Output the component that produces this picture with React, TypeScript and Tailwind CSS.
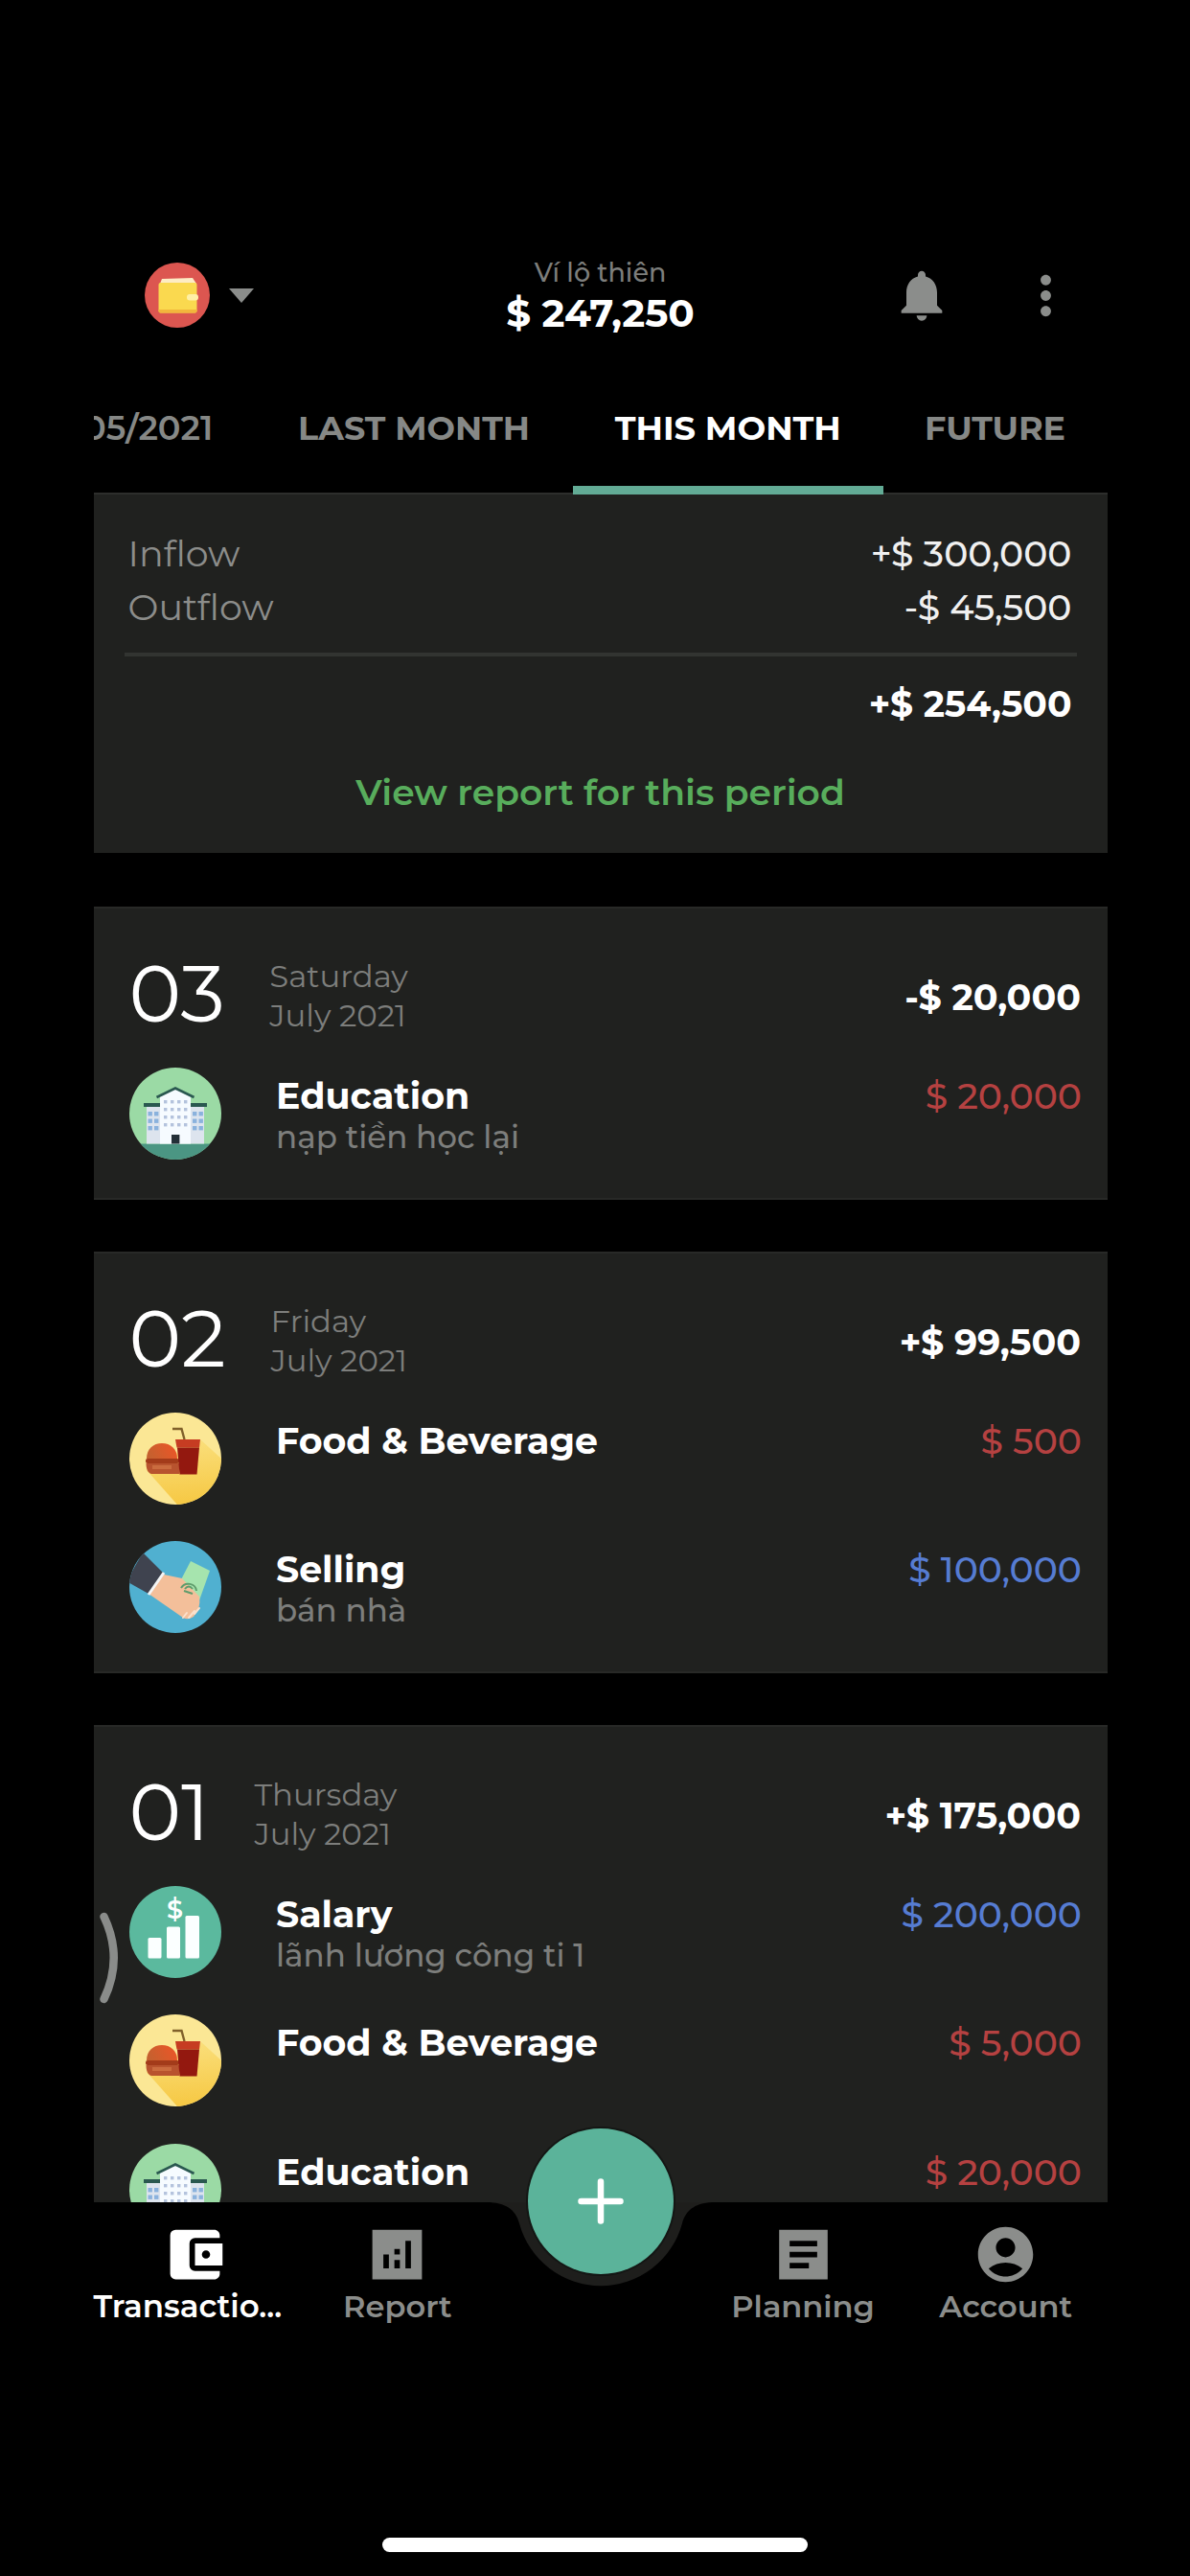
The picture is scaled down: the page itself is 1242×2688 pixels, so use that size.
import type { ReactNode } from "react";
import { MdAccountBalanceWallet, MdAccountCircle, MdMoreVert, MdNotifications } from "react-icons/md";

type IconName = "education" | "food" | "selling" | "salary";
type Entry = { icon: IconName; title: string; note?: string; amount: string; income?: boolean };
type Day = { day: string; weekday: string; month: string; total: string; entries: Entry[] };

const days: Day[] = [
  {
    day: "03",
    weekday: "Saturday",
    month: "July 2021",
    total: "-$ 20,000",
    entries: [{ icon: "education", title: "Education", note: "nạp tiền học lại", amount: "$ 20,000" }],
  },
  {
    day: "02",
    weekday: "Friday",
    month: "July 2021",
    total: "+$ 99,500",
    entries: [
      { icon: "food", title: "Food & Beverage", amount: "$ 500" },
      { icon: "selling", title: "Selling", note: "bán nhà", amount: "$ 100,000", income: true },
    ],
  },
  {
    day: "01",
    weekday: "Thursday",
    month: "July 2021",
    total: "+$ 175,000",
    entries: [
      { icon: "salary", title: "Salary", note: "lãnh lương công ti 1", amount: "$ 200,000", income: true },
      { icon: "food", title: "Food & Beverage", amount: "$ 5,000" },
      { icon: "education", title: "Education", amount: "$ 20,000" },
    ],
  },
];

function WalletBadge() {
  return (
    <svg viewBox="0 0 68 68" className="size-[68px]">
      <circle cx="34" cy="34" r="34" fill="#dc5650" />
      <path d="M16 22L18 17L50 16L54 22Z" fill="#fdecc4" />
      <rect x="14.5" y="21" width="40" height="31.5" rx="2" fill="#fad94f" />
      <path d="M14.5 49h40v1.5a2 2 0 0 1-2 2h-36a2 2 0 0 1-2-2z" fill="#f2b63c" />
      <rect x="44" y="33" width="12" height="6.5" rx="3" fill="#fff0a6" />
    </svg>
  );
}

function EducationIcon() {
  return (
    <svg viewBox="0 0 96 96" className="size-24">
      <defs>
        <clipPath id="edu-disc">
          <circle cx="48" cy="48" r="48" />
        </clipPath>
      </defs>
      <g clipPath="url(#edu-disc)">
        <rect width="96" height="96" fill="#9bdaa5" />
        <rect y="79.5" width="96" height="17" fill="#4b9683" />
        <rect x="18" y="41" width="60" height="38.5" fill="#dde4ee" />
        <rect x="15" y="37" width="18" height="4" fill="#2a5850" />
        <rect x="63" y="37" width="18" height="4" fill="#2a5850" />
        <path d="M32 79.5V30L48 22L64 30V79.5Z" fill="#f6fbff" />
        <path d="M28.5 31L48 21.5L67.5 31" fill="none" stroke="#2a5850" strokeWidth="2.6" />
        {[34, 42, 50, 58].map((y) =>
          [36, 43, 50, 57].map((x) => <rect key={`${x}-${y}`} x={x} y={y} width="3.4" height="3.4" fill="#b4c3dd" />),
        )}
        {[46, 53.5, 61].map((y) =>
          [19.5, 26, 66, 72.5].map((x) => <rect key={`${x}-${y}`} x={x} y={y} width="4.4" height="4.4" fill="#8bb2dd" />),
        )}
        <rect x="44" y="70" width="8.4" height="9.5" fill="#232f37" />
      </g>
    </svg>
  );
}

function FoodIcon() {
  return (
    <svg viewBox="0 0 96 96" className="size-24">
      <defs>
        <clipPath id="food-disc">
          <circle cx="48" cy="48" r="48" />
        </clipPath>
        <linearGradient id="food-shade" x1="0.5" y1="0" x2="0.6" y2="1">
          <stop offset="0" stopColor="#fadf7c" />
          <stop offset="1" stopColor="#f6c843" />
        </linearGradient>
        <linearGradient id="food-bun" x1="0" y1="0.6" x2="1" y2="0.3">
          <stop offset="0" stopColor="#c4612f" />
          <stop offset="1" stopColor="#ec5527" />
        </linearGradient>
      </defs>
      <g clipPath="url(#food-disc)">
        <rect width="96" height="96" fill="#fbe795" />
        <path d="M74 28L96 48V96H50L18 60Z" fill="url(#food-shade)" />
        <path d="M18 48C18 38 25 32 34 32S50 38 50 48Z" fill="url(#food-bun)" />
        <rect x="17" y="48" width="35" height="5" rx="2" fill="#a33b1a" />
        <path d="M17.5 53H52V64H23C19 63 17.5 58 17.5 53Z" fill="#b8532e" />
        <rect x="24" y="55" width="20" height="4" fill="#cb6c3f" />
        <path d="M45 17H54.5L57.5 28" fill="none" stroke="#80602a" strokeWidth="2.4" />
        <path d="M48 28H74L73 36.5H49.5Z" fill="#c63c22" />
        <path d="M50 36.5H73L70.5 64.5H52.5Z" fill="#93180f" />
      </g>
    </svg>
  );
}

function SellingIcon() {
  return (
    <svg viewBox="0 0 96 96" className="size-24">
      <defs>
        <clipPath id="sell-disc">
          <circle cx="48" cy="48" r="48" />
        </clipPath>
      </defs>
      <g clipPath="url(#sell-disc)">
        <rect width="96" height="96" fill="#50b0d0" />
        <path d="M64 21L84 31L73 62L51 46Z" fill="#a6e4ae" />
        <path d="M36 35L55 39L73 58Q75 70 67 79Q61 83 56 80L20 55Z" fill="#f3bf9a" />
        <g fill="none" stroke="#5f9c6c" strokeWidth="2">
          <path d="M54 49A8.5 8 0 0 1 70 52" />
          <path d="M58 50Q62 45 66 50M57 52L66 55" />
        </g>
        <path d="M68 76L73 70M62 80L68 73M56 80L60 75" stroke="#fbe0cc" strokeWidth="2" strokeLinecap="round" />
        <path d="M14 12L35 33L20 55L-3 42Z" fill="#3f434f" />
        <path d="M36 33L20 56" stroke="#f3f5f6" strokeWidth="3" />
      </g>
    </svg>
  );
}

function SalaryIcon() {
  return (
    <svg viewBox="0 0 96 96" className="size-24">
      <circle cx="48" cy="48" r="48" fill="#5bb99e" />
      <g fill="#fbffff">
        <rect x="19.5" y="54" width="14" height="21.5" rx="1.5" />
        <rect x="39" y="42.5" width="14" height="33" rx="1.5" />
        <rect x="58.5" y="31" width="14.5" height="44.5" rx="1.5" />
      </g>
      <text x="47.5" y="34" textAnchor="middle" fontSize="27" fontWeight="600" fill="#fbffff">
        $
      </text>
    </svg>
  );
}

const icons: Record<IconName, () => ReactNode> = {
  education: EducationIcon,
  food: FoodIcon,
  selling: SellingIcon,
  salary: SalaryIcon,
};

function Header() {
  return (
    <header className="mt-[258px] grid h-[100px] grid-cols-[1fr_auto_1fr] items-center">
      <div className="flex items-center gap-5 pl-[53px]">
        <WalletBadge />
        <svg viewBox="0 0 26 15" className="mt-px h-[15px] w-[26px]">
          <path d="M0 0H26L13 15Z" fill="#8b8d8b" />
        </svg>
      </div>
      <div className="pt-1 text-center">
        <p className="text-[27px] leading-8 font-medium text-[#7d7e7c]">Ví lộ thiên</p>
        <p className="text-[40.5px] leading-[51px] font-bold text-white">$ 247,250</p>
      </div>
      <div className="flex items-center justify-end gap-[65px] pr-8 text-[#8b8d8b]">
        <MdNotifications className="size-16" />
        <MdMoreVert className="size-[65px]" />
      </div>
    </header>
  );
}

function Tabs() {
  return (
    <nav className="relative z-10 -mb-[2px] flex h-[158px] overflow-hidden text-[35.2px] leading-10 font-bold text-[#868886]">
      <div className="-ml-[54.5px] flex w-[223.5px] shrink-0 items-center justify-center pt-[19px] font-semibold">
        05/2021
      </div>
      <div className="flex w-[331px] shrink-0 items-center justify-center pt-[19px] text-[34.9px] whitespace-nowrap">
        LAST MONTH
      </div>
      <div className="relative flex w-[324.5px] shrink-0 items-center justify-center pt-[19px] whitespace-nowrap text-white">
        THIS MONTH
        <span className="absolute inset-x-0 bottom-0 h-[9px] bg-[#62ab95]" />
      </div>
      <div className="flex w-[233px] shrink-0 items-center justify-center pt-[19px] text-[34.9px]">FUTURE</div>
    </nav>
  );
}

function Summary() {
  return (
    <section className="mb-14 h-[376px] shrink-0 border-t-2 border-[#2d2e2c] bg-[#20211f] pt-[34px] text-[37.7px] leading-[56px]">
      <div className="flex justify-between pr-[37px] pl-[36px]">
        <span className="text-[38px] text-[#8c8d8b]">Inflow</span>
        <span className="font-medium text-[#f0f0f0]">+$ 300,000</span>
      </div>
      <div className="flex justify-between pr-[37px] pl-[36px]">
        <span className="text-[38px] text-[#8c8d8b]">Outflow</span>
        <span className="font-medium text-[#f0f0f0]">-$ 45,500</span>
      </div>
      <div className="mx-8 mt-[19px] h-[4px] bg-[#323431]" />
      <p className="mt-[22px] pr-[37px] text-right font-bold text-white">+$ 254,500</p>
      <p className="mt-9 text-center font-semibold text-[#58ad5c]">View report for this period</p>
    </section>
  );
}

function EntryRow({ entry }: { entry: Entry }) {
  const Icon = icons[entry.icon];
  return (
    <div className="flex h-[134.6px] items-start pr-[26.5px] pl-[37px]">
      <div className="mt-[19px]">
        <Icon />
      </div>
      <div className="mt-[27px] ml-[57.5px] flex-1">
        <p className="text-[37.9px] leading-[44px] font-bold text-white">{entry.title}</p>
        {entry.note && <p className="text-[32.6px] leading-10 font-medium text-[#7d7e7c]">{entry.note}</p>}
      </div>
      <p
        className={
          entry.income
            ? "mt-[27px] text-[37.7px] leading-[44px] font-medium text-[#567cd2]"
            : "mt-[27px] text-[37.7px] leading-[44px] font-medium text-[#b54141]"
        }
      >
        {entry.amount}
      </p>
    </div>
  );
}

function DayCard({ day }: { day: Day }) {
  return (
    <section className="mb-[54px] shrink-0 border-y-2 border-[#282927] bg-[#20211f] pb-5">
      <div className="flex h-[147px] items-start pt-px pr-[27.5px] pl-[37px]">
        <p className="mt-[46px] text-[82.5px] leading-[84px] text-white">{day.day}</p>
        <div className="mt-[49px] ml-[46.5px] flex-1 text-[32.4px] leading-[41px] text-[#7d7e7c]">
          <p>{day.weekday}</p>
          <p>{day.month}</p>
        </div>
        <p className="mt-16 text-[38px] leading-[56px] font-bold text-white">{day.total}</p>
      </div>
      {day.entries.map((entry) => (
        <EntryRow key={entry.title} entry={entry} />
      ))}
    </section>
  );
}

function NavItem({ icon, label, active }: { icon: ReactNode; label: string; active?: boolean }) {
  return (
    <div className={active ? "flex flex-col items-center text-white" : "flex flex-col items-center text-[#8b8d8b]"}>
      {icon}
      <span className={active ? "self-start text-[32.5px] leading-10" : "text-[32.1px] leading-10"}>{label}</span>
    </div>
  );
}

function BottomBar() {
  return (
    <nav className="relative grid h-[150px] shrink-0 grid-cols-5 pt-5 font-semibold">
      <svg viewBox="0 0 240 90" className="absolute top-0 left-1/2 h-[90px] w-[240px] -translate-x-1/2">
        <path d="M0 0C20 0 31 7 35 22A88 88 0 0 0 205 22C209 7 220 0 240 0Z" fill="#1e1e1c" />
      </svg>
      <NavItem active label="Transactio..." icon={<MdAccountBalanceWallet className="size-[69px]" />} />
      <NavItem
        label="Report"
        icon={
          <svg viewBox="0 0 24 24" className="size-[69px]" fill="currentColor">
            <path fillRule="evenodd" d="M3 3H21V21H3ZM7 12V17H9V12ZM11 10V12H13V10ZM11 14V17H13V14ZM15 7V17H17V7Z" />
          </svg>
        }
      />
      <div />
      <NavItem
        label="Planning"
        icon={
          <svg viewBox="0 0 24 24" className="size-[69px]" fill="currentColor">
            <path fillRule="evenodd" d="M3.2 3H20.8V21H3.2ZM7 7V9H17V7ZM7 11V13H17V11ZM7 15V17H14V15Z" />
          </svg>
        }
      />
      <NavItem label="Account" icon={<MdAccountCircle className="size-[69px]" />} />
      <button className="absolute -top-[77px] left-1/2 flex size-[152px] -translate-x-1/2 items-center justify-center rounded-full bg-[#5bb39a] shadow-[0_0_0_2px_#141614]">
        <svg viewBox="0 0 48 48" className="size-12">
          <path d="M24 3.5V44.5M3.5 24H44.5" stroke="#fff" strokeWidth="6.5" strokeLinecap="round" />
        </svg>
      </button>
    </nav>
  );
}

export default function App() {
  return (
    <div className="flex h-[2688px] w-[1242px] flex-col overflow-hidden bg-black font-['Montserrat','Inter',sans-serif]">
      <div className="ml-[97.5px] flex w-[1058px] flex-col">
        <Header />
        <Tabs />
        <main className="relative flex h-[1784px] flex-col overflow-hidden">
          <Summary />
          {days.map((day) => (
            <DayCard key={day.day} day={day} />
          ))}
          <svg viewBox="0 0 24 100" className="absolute top-[1479px] left-1 h-[100px] w-6">
            <path d="M6.5 7Q27 50 6.5 93" fill="none" stroke="#8a8c8a" strokeWidth="8.5" strokeLinecap="round" />
          </svg>
        </main>
        <BottomBar />
      </div>
      <div className="mx-auto mt-[200px] h-[15px] w-[444px] shrink-0 rounded-full bg-white" />
    </div>
  );
}
